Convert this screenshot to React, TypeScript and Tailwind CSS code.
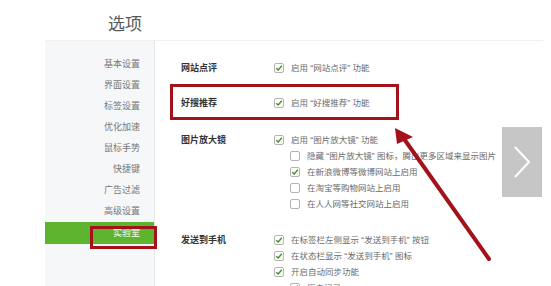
const NAV = ['基本设置', '界面设置', '标签设置', '优化加速', '鼠标手势', '快捷键', '广告过滤', '高级设置']

type Opt = { text: string; checked: boolean; sub?: boolean }

const SECTIONS: { label: string; gap: string; opts: Opt[] }[] = [
  { label: '网站点评', gap: 'mb-[19px]', opts: [{ text: '启用 “网站点评” 功能', checked: true }] },
  { label: '好搜推荐', gap: 'mb-[21px]', opts: [{ text: '启用 “好搜推荐” 功能', checked: true }] },
  {
    label: '图片放大镜',
    gap: 'mb-[20px]',
    opts: [
      { text: '启用 “图片放大镜” 功能', checked: true },
      { text: '隐藏 “图片放大镜” 图标，腾出更多区域来显示图片', checked: false, sub: true },
      { text: '在新浪微博等微博网站上启用', checked: true, sub: true },
      { text: '在淘宝等购物网站上启用', checked: false, sub: true },
      { text: '在人人网等社交网站上启用', checked: false, sub: true },
    ],
  },
  {
    label: '发送到手机',
    gap: '',
    opts: [
      { text: '在标签栏左侧显示 “发送到手机” 按钮', checked: true },
      { text: '在状态栏显示 “发送到手机” 图标', checked: true },
      { text: '开启自动同步功能', checked: true },
      { text: '历史记录', checked: true, sub: true },
    ],
  },
]

function Check({ checked }: { checked: boolean }) {
  return (
    <span className="w-[10px] h-[10px] shrink-0 rounded-[2px] border border-[#b4b4b4] bg-white flex items-center justify-center">
      {checked && (
        <svg width="8" height="8" viewBox="0 0 8 8">
          <path d="M1.2 4.2 L3.2 6 L6.8 1.8" fill="none" stroke="#3f8f2a" strokeWidth="1.4" />
        </svg>
      )}
    </span>
  )
}

export default function App() {
  return (
    <div className="relative w-[551px] h-[286px] overflow-hidden bg-white font-['Liberation_Sans','Noto_Sans_CJK_SC',sans-serif]">
      <div className="h-[40px] pl-[108px] pt-[15px] text-[17px] leading-[20px] text-[#5a5a5a]">选项</div>

      <div className="ml-[45px] mr-[8px] flex h-[246px] border-t border-[#eef0f2]">
        <div className="w-[110px] shrink-0 bg-[#f5f7f9] border-r border-[#e6e8eb] pt-[13px]">
          {NAV.map((n) => (
            <div key={n} className="h-[21px] leading-[21px] pr-[14px] text-right text-[9px] text-[#777]">
              {n}
            </div>
          ))}
          <div className="h-[22px] leading-[22px] pr-[14px] text-right text-[9px] text-white bg-[#5db42f]">实验室</div>
        </div>

        <div className="flex-1 pl-[26px] pt-[19px]">
          {SECTIONS.map((s) => (
            <div key={s.label} className={`flex ${s.gap}`}>
              <div className="w-[93px] shrink-0 h-[16px] leading-[16px] text-[9px] font-bold text-[#333]">{s.label}</div>
              <div>
                {s.opts.map((o) => (
                  <div key={o.text} className={`flex items-center h-[16px] ${o.sub ? 'pl-[16px]' : ''}`}>
                    <Check checked={o.checked} />
                    <span className="ml-[7px] text-[8.5px] text-[#6a6a6a] whitespace-nowrap">{o.text}</span>
                  </div>
                ))}
              </div>
            </div>
          ))}
        </div>
      </div>

      {/* annotation boxes */}
      <div className="absolute left-[170px] top-[84px] w-[229px] h-[36px] border-[3px] border-[#a3121b]" />
      <div className="absolute left-[90px] top-[226px] w-[67px] h-[23px] border-[3px] border-[#a3121b]" />

      {/* next button */}
      <div className="absolute left-[502px] top-[127px] w-[40px] h-[70px] bg-[#c6c6c6] flex items-center justify-center">
        <svg width="20" height="36" viewBox="0 0 20 36">
          <path d="M3 3 L17 18 L3 33" fill="none" stroke="#fff" strokeWidth="2" />
        </svg>
      </div>

      {/* arrow */}
      <svg className="absolute inset-0 pointer-events-none" width="551" height="286">
        <line x1="489" y1="259" x2="402" y2="136" stroke="#a3121b" strokeWidth="4" strokeLinecap="round" />
        <polygon points="395,128 397,144 413,137" fill="#a3121b" />
      </svg>
    </div>
  )
}
